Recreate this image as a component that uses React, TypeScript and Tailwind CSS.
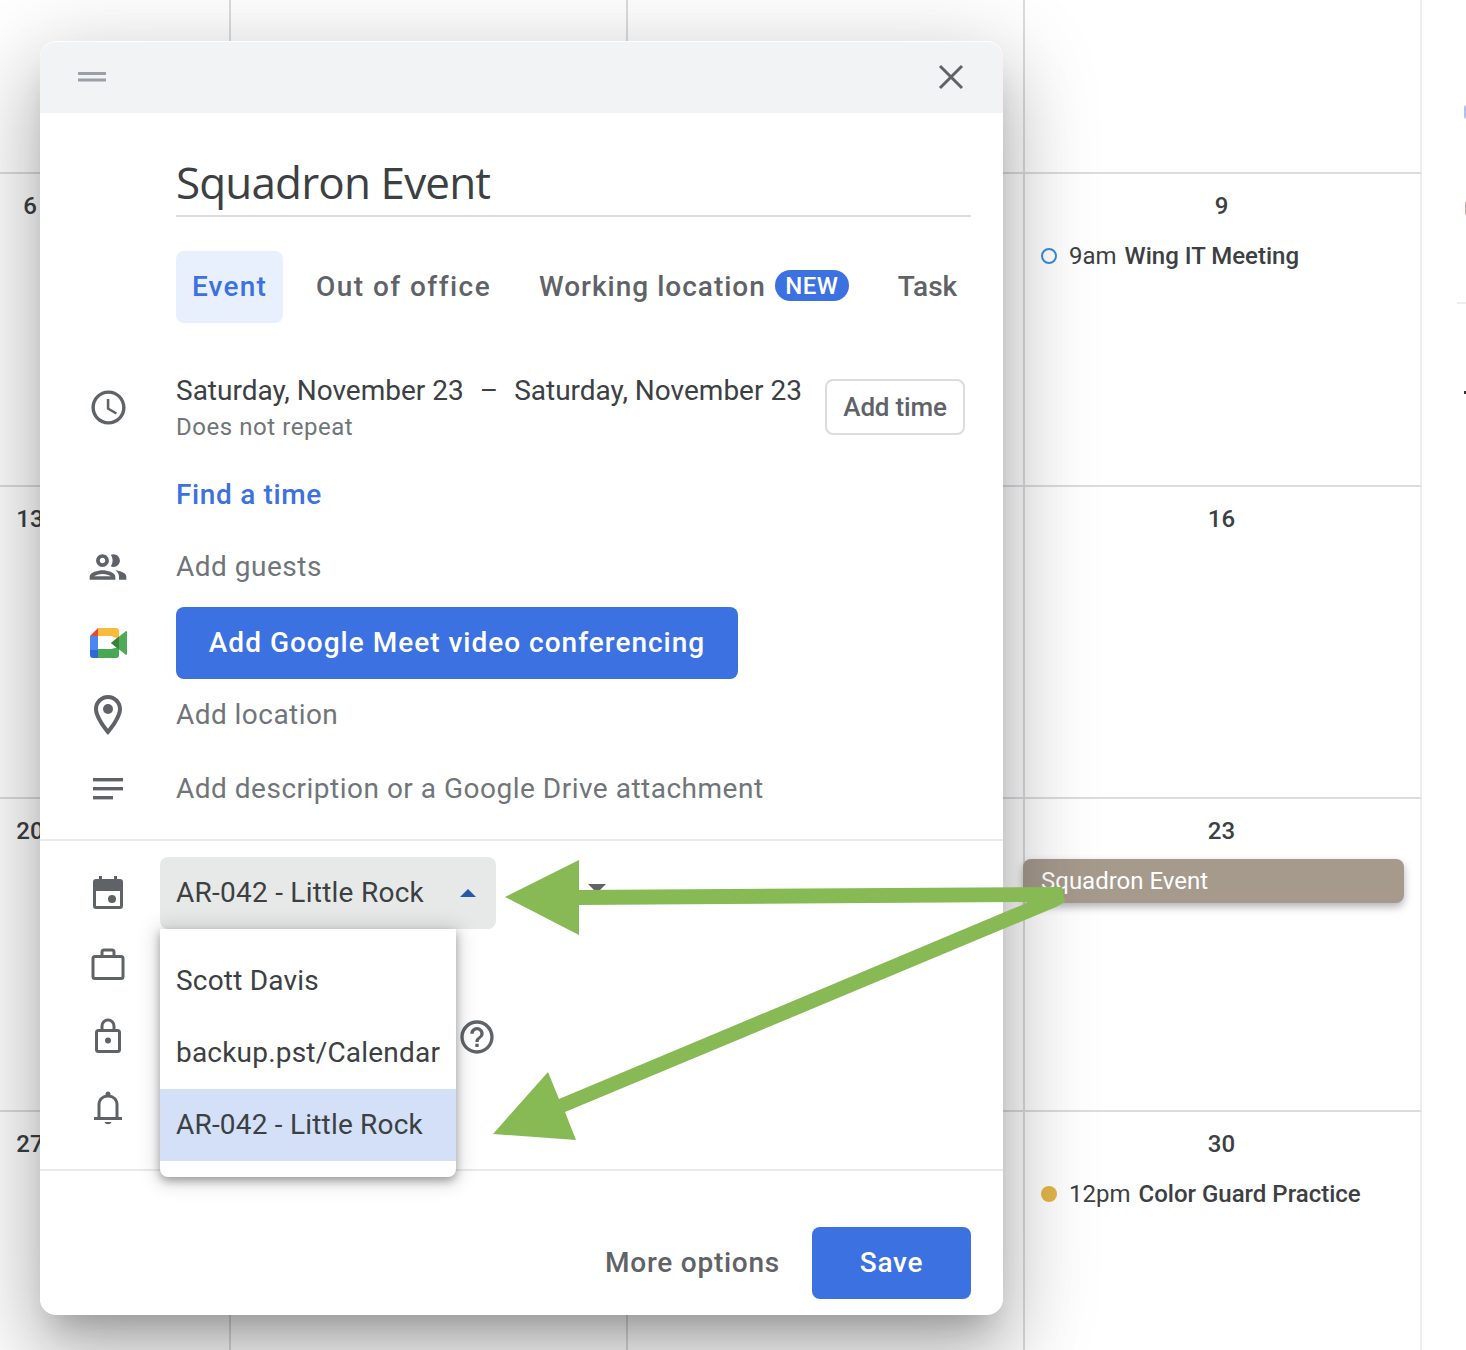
import React from "react";

const roboto = "font-['Roboto',sans-serif]";
const gsans = "font-['Open_Sans',sans-serif]";

const gray = "#5f6368";

function HandleIcon() {
  return (
    <svg width="28" height="10" viewBox="0 0 28 10">
      <rect y="0" width="28" height="3" fill="#9aa0a6" />
      <rect y="6.5" width="28" height="3" fill="#9aa0a6" />
    </svg>
  );
}
function CloseIcon() {
  return (
    <svg width="26" height="26" viewBox="0 0 26 26" fill="none" stroke={gray} strokeWidth="3">
      <path d="M2 2 L24 24 M24 2 L2 24" />
    </svg>
  );
}
function ClockIcon() {
  return (
    <svg width="41" height="41" viewBox="0 0 24 24" fill={gray}>
      <path d="M11.99 2C6.47 2 2 6.48 2 12s4.47 10 9.99 10C17.52 22 22 17.52 22 12S17.52 2 11.99 2zM12 20c-4.42 0-8-3.58-8-8s3.58-8 8-8 8 3.58 8 8-3.58 8-8 8zm.5-13H11v6l5.25 3.15.75-1.23-4.5-2.67z" />
    </svg>
  );
}
function PeopleIcon() {
  return (
    <svg width="44" height="44" viewBox="0 0 24 24" fill={gray}>
      <path d="M9 13.75c-2.34 0-7 1.17-7 3.5V19h14v-1.75c0-2.33-4.66-3.5-7-3.5zM4.34 17c.84-.58 2.87-1.25 4.66-1.25s3.82.67 4.66 1.25H4.34zM9 12c1.93 0 3.5-1.57 3.5-3.5S10.93 5 9 5 5.5 6.57 5.5 8.5 7.07 12 9 12zm0-5c.83 0 1.5.67 1.5 1.5S9.83 10 9 10s-1.5-.67-1.5-1.5S8.17 7 9 7zm7.04 6.81c1.16.84 1.96 1.96 1.96 3.44V19h4v-1.75c0-2.02-3.5-3.17-5.96-3.44zM15 12c1.93 0 3.5-1.57 3.5-3.5S16.93 5 15 5c-.54 0-1.04.13-1.5.35.63.89 1 1.98 1 3.15s-.37 2.26-1 3.15c.46.22.96.35 1.5.35z" />
    </svg>
  );
}
function MeetIcon() {
  return (
    <svg width="37" height="30" viewBox="0 0 37 30">
      <path d="M0 8 L8 0 V8 Z" fill="#e2483d" />
      <rect x="0" y="8" width="8" height="14" fill="#4a87f3" />
      <path d="M0 22 H8 V30 H3 Q0 30 0 27 Z" fill="#2f68d0" />
      <path d="M8 0 H26 Q29 0 29 3 V11 L21 8 H8 Z" fill="#f9bc3a" />
      <path d="M8 21 H21 L29 19 V27 Q29 30 26 30 H8 Z" fill="#48a853" />
      <path d="M21 15 L36 3 Q37 3 37 4 V26 Q37 27 36 27 L21 15 Z" fill="#4fab58" />
      <path d="M21 15 L29 8.6 V21.4 Z" fill="#38803c" />
    </svg>
  );
}
function PinIcon() {
  return (
    <svg width="48" height="48" viewBox="0 0 24 24" fill={gray}>
      <path d="M12 2C8.13 2 5 5.13 5 9c0 5.25 7 13 7 13s7-7.75 7-13c0-3.87-3.13-7-7-7zM7 9c0-2.76 2.24-5 5-5s5 2.24 5 5c0 2.88-2.88 7.19-5 9.88C9.92 16.21 7 11.85 7 9z" />
      <circle cx="12" cy="9" r="2.5" />
    </svg>
  );
}
function NotesIcon() {
  return (
    <svg width="30" height="22" viewBox="0 0 30 22" fill={gray}>
      <rect y="0" width="30" height="3.4" />
      <rect y="9" width="30" height="3.4" />
      <rect y="18" width="20" height="3.4" />
    </svg>
  );
}
function CalIcon() {
  return (
    <svg width="30" height="33" viewBox="0 0 30 33" fill={gray}>
      <path
        fillRule="evenodd"
        d="M6 0 H9 V3 H21 V0 H24 V3 H27 Q30 3 30 6 V30 Q30 33 27 33 H3 Q0 33 0 30 V6 Q0 3 3 3 H6 Z M3 15 V30 H27 V15 Z"
      />
      <circle cx="19" cy="23" r="4" />
    </svg>
  );
}
function BriefcaseIcon() {
  return (
    <svg width="34" height="32" viewBox="0 0 34 32" fill="none" stroke={gray} strokeWidth="3">
      <rect x="2" y="8.5" width="30" height="22" rx="2" />
      <path d="M11 8 V4 Q11 2 13 2 H21 Q23 2 23 4 V8" />
    </svg>
  );
}
function LockIcon() {
  return (
    <svg width="26" height="35" viewBox="0 0 26 35" fill="none" stroke={gray} strokeWidth="3">
      <rect x="1.5" y="12.5" width="23" height="21" rx="2" />
      <path d="M7 12 V8 A6 6 0 0 1 19 8 V12" />
      <circle cx="13" cy="22.5" r="3" fill={gray} stroke="none" />
    </svg>
  );
}
function BellIcon() {
  return (
    <svg width="28" height="34" viewBox="0 0 28 34" fill="none" stroke={gray} strokeWidth="3">
      <path d="M0 27.5 H28" />
      <path d="M5 27 V14 C5 8 9 5 14 5 C19 5 23 8 23 14 V27" />
      <circle cx="14" cy="3" r="2.5" fill={gray} stroke="none" />
      <path d="M10.5 31 H17.5 C16.5 34 11.5 34 10.5 31 Z" fill={gray} stroke="none" />
    </svg>
  );
}
function HelpIcon() {
  return (
    <svg width="40" height="40" viewBox="0 0 24 24" fill={gray}>
      <path d="M11 18h2v-2h-2v2zm1-16C6.48 2 2 6.48 2 12s4.48 10 10 10 10-4.48 10-10S17.52 2 12 2zm0 18c-4.41 0-8-3.59-8-8s3.59-8 8-8 8 3.59 8 8-3.59 8-8 8zm0-14c-2.21 0-4 1.79-4 4h2c0-1.1.9-2 2-2s2 .9 2 2c0 2-3 1.75-3 5h2c0-2.25 3-2.5 3-5 0-2.21-1.79-4-4-4z" />
    </svg>
  );
}

function Modal() {
  return (
    <div className="absolute left-[40px] top-[42px] w-[963px] h-[1273px] bg-white rounded-[16px] shadow-[0_-1px_0_#ffffff,0_48px_76px_6px_rgba(0,0,0,0.16),0_18px_92px_16px_rgba(0,0,0,0.14),0_22px_30px_-14px_rgba(0,0,0,0.22)]">
      <div className="h-[71px] pb-[1px] bg-[#f1f3f4] rounded-t-[16px] flex items-center justify-between pl-[38px] pr-[39px]">
        <HandleIcon />
        <CloseIcon />
      </div>
      <div className="pl-[136px] pr-[32px]">
        <div className={`h-[104px] flex items-end pb-[3px] border-b-2 border-[#dadce0] text-[44px] leading-[60px] tracking-[-0.85px] text-[#3c4043] ${gsans}`}>
          Squadron Event
        </div>
        <div className={`mt-[34px] flex gap-[17px] text-[28px] text-[#5f6368] font-medium ${roboto}`}>
          <div className="h-[72px] w-[107px] shrink-0 flex items-center justify-center rounded-[8px] bg-[#e8f0fe] text-[#3b71e0] tracking-[1.2px]">Event</div>
          <div className="h-[72px] px-[16px] flex items-center tracking-[1.45px] w-[206px] shrink-0 whitespace-nowrap">Out of office</div>
          <div className="h-[72px] px-[16px] shrink-0 flex items-center gap-[9px] tracking-[1px] whitespace-nowrap">
            Working location
            <span className="h-[31px] w-[74px] -mt-[3px] rounded-full bg-[#3b71e0] text-white text-[24px] flex items-center justify-center tracking-[0.5px]">NEW</span>
          </div>
          <div className="h-[72px] px-[16px] shrink-0 flex items-center">Task</div>
        </div>
      </div>

      <div className="mt-[49px] flex items-start h-[70px]">
        <div className="w-[136px] h-[70px] flex justify-center items-center"><ClockIcon /></div>
        <div className={`flex-1 pt-[1px] ${roboto}`}>
          <div className="text-[28px] leading-[36px] text-[#3c4043] whitespace-nowrap flex">
            <span>Saturday, November 23</span>
            <span className="ml-[16px] mr-[16px]">–</span>
            <span>Saturday, November 23</span>
          </div>
          <div className="text-[24px] leading-[36px] text-[#70757a] tracking-[0.55px]">Does not repeat</div>
        </div>
        <div className={`mr-[38px] mt-[7px] w-[140px] h-[56px] border-2 border-[#dadce0] rounded-[8px] flex items-center justify-center text-[26px] font-medium tracking-[-0.2px] text-[#5f6368] ${roboto}`}>
          Add time
        </div>
      </div>

      <div className={`mt-[25px] ml-[136px] h-[56px] flex items-center text-[28px] font-medium tracking-[0.65px] text-[#3b71e0] ${roboto}`}>Find a time</div>

      <div className="mt-[16px] h-[56px] flex items-center">
        <div className="w-[136px] flex justify-center"><PeopleIcon /></div>
        <div className={`text-[28px] tracking-[0.5px] text-[#70757a] ${roboto}`}>Add guests</div>
      </div>

      <div className="mt-[12px] h-[72px] flex items-center">
        <div className="w-[136px] flex justify-center"><MeetIcon /></div>
        <div className={`w-[562px] h-[72px] rounded-[8px] bg-[#3b71e0] text-white flex items-center justify-center text-[28px] font-medium tracking-[1px] whitespace-nowrap ${roboto}`}>
          Add Google Meet video conferencing
        </div>
      </div>

      <div className="h-[72px] flex items-center">
        <div className="w-[136px] flex justify-center"><PinIcon /></div>
        <div className={`text-[28px] tracking-[0.45px] text-[#70757a] ${roboto}`}>Add location</div>
      </div>

      <div className="mt-[2px] h-[72px] flex items-center">
        <div className="w-[136px] flex justify-center"><NotesIcon /></div>
        <div className={`text-[28px] tracking-[0.5px] text-[#70757a] ${roboto}`}>Add description or a Google Drive attachment</div>
      </div>

      <div className="mt-[14px] h-[2px] bg-[#e8eaed]" />

      <div className="relative pt-[16px]">
        <div className="h-[72px] flex items-center">
          <div className="w-[136px] -mt-[2px] flex justify-center"><CalIcon /></div>
          <div className={`-ml-[16px] w-[336px] h-[72px] rounded-[8px] bg-[#e7e9e8] pl-[16px] pr-[20px] flex items-center justify-between text-[28px] tracking-[0.25px] text-[#3c4043] ${roboto}`}>
            <span>AR-042 - Little Rock</span>
            <svg width="16" height="8" viewBox="0 0 16 8" className="-mt-[1px]"><path d="M0 8 L8 0 L16 8 Z" fill="#2a58a8" /></svg>
          </div>
          <svg width="18" height="9" viewBox="0 0 18 9" className="ml-[92px] -mt-[9px]"><path d="M0 0 H18 L9 9 Z" fill={gray} /></svg>
        </div>
        <div className="h-[72px] flex items-center"><div className="w-[136px] -mt-[3px] flex justify-center"><BriefcaseIcon /></div></div>
        <div className="h-[72px] flex items-center">
          <div className="w-[136px] -mt-[3px] flex justify-center"><LockIcon /></div>
          <div className="ml-[281px]"><HelpIcon /></div>
        </div>
        <div className="h-[72px] flex items-center"><div className="w-[136px] -mt-[2px] flex justify-center"><BellIcon /></div></div>

        <div className={`absolute left-[120px] top-[88px] w-[296px] bg-white rounded-b-[8px] pt-[16px] pb-[16px] text-[28px] tracking-[0.2px] text-[#3c4043] shadow-[0_4px_8px_rgba(0,0,0,0.3),0_2px_20px_4px_rgba(0,0,0,0.15)] ${roboto}`}>
          <div className="h-[72px] px-[16px] flex items-center">Scott Davis</div>
          <div className="h-[72px] px-[16px] flex items-center whitespace-nowrap">backup.pst/Calendar</div>
          <div className="h-[72px] px-[16px] flex items-center bg-[#d3e0f7]">AR-042 - Little Rock</div>
        </div>
      </div>

      <div className="mt-[24px] h-[2px] bg-[#e8eaed]" />

      <div className="mt-[56px] flex justify-end items-center pr-[32px] gap-[32px]">
        <span className={`text-[28px] font-medium tracking-[0.75px] text-[#5f6368] ${roboto}`}>More options</span>
        <div className={`w-[159px] h-[72px] rounded-[8px] bg-[#3b71e0] text-white flex items-center justify-center text-[28px] font-medium tracking-[0.75px] ${roboto}`}>Save</div>
      </div>
    </div>
  );
}

function Arrows() {
  return (
    <svg className="absolute left-0 top-0 pointer-events-none" width="1466" height="1350" viewBox="0 0 1466 1350">
      <polygon
        fill="#87ba54"
        points="505,897 579,860 579,890 1062,887 1065,902 1056,907 565,1112 576,1140 493,1134 548,1072 559,1099 1029,902 579,905 579,935"
      />
    </svg>
  );
}

const line = "border-r-2 border-b-2 border-[#dadce0]";
const lastLine = "border-r-2 border-[#dadce0]";
const dayCol = "border-r-2 border-b-2 border-b-[#dadce0] border-r-[#eeeef0] pt-[16px]";
const num = "text-[24px] font-medium text-[#3c4043] leading-[32px]";

export default function App() {
  return (
    <div className={`relative w-[1466px] h-[1350px] bg-white overflow-hidden ${roboto}`}>
      <div className="grid grid-flow-col grid-cols-[231px_397px_397px_397px_1fr] grid-rows-[174px_313px_312px_313px_1fr] h-[1350px]">
        <div className={line} />
        {["6", "13", "20"].map((d) => (
          <div key={d} className={`${line} pt-[16px]`}>
            <div className={`w-[60px] text-center ${num}`}>{d}</div>
          </div>
        ))}
        <div className={`${lastLine} pt-[16px]`}>
          <div className={`w-[60px] text-center ${num}`}>27</div>
        </div>

        <div className={line} />
        <div className={line} />
        <div className={line} />
        <div className={line} />
        <div className={lastLine} />

        <div className={line} />
        <div className={line} />
        <div className={line} />
        <div className={line} />
        <div className={lastLine} />

        <div className="border-r-2 border-b-2 border-b-[#dadce0] border-r-[#eeeef0]" />
        <div className={dayCol}>
          <div className={`text-center pr-[2px] ${num}`}>9</div>
          <div className="mt-[18px] pl-[16px] flex items-center h-[32px] text-[24px] text-[#3c4043] whitespace-nowrap">
            <span className="w-[16px] h-[16px] rounded-full border-2 border-[#3b8ddd] mr-[12px]" />
            <span>9am</span>
            <span className="ml-[8px] font-medium">Wing IT Meeting</span>
          </div>
        </div>
        <div className={dayCol}>
          <div className={`text-center pr-[2px] ${num}`}>16</div>
        </div>
        <div className={dayCol}>
          <div className={`text-center pr-[2px] ${num}`}>23</div>
          <div className="-ml-[2px] mt-[12px] w-[381px] h-[44px] rounded-[8px] bg-[#a59a8c] shadow-[0_4px_8px_rgba(0,0,0,0.3)] pl-[18px] flex items-center text-[24px] text-white">Squadron Event</div>
        </div>
        <div className="border-r-2 border-r-[#eeeef0] pt-[16px]">
          <div className={`text-center pr-[2px] ${num}`}>30</div>
          <div className="mt-[18px] pl-[16px] flex items-center h-[32px] text-[24px] text-[#3c4043] whitespace-nowrap">
            <span className="w-[16px] h-[16px] rounded-full bg-[#e5b64a] mr-[12px]" />
            <span>12pm</span>
            <span className="ml-[8px] font-medium">Color Guard Practice</span>
          </div>
        </div>

        <div className="relative row-span-5">
          <div className="absolute left-[42px] top-[105px] w-[3px] h-[14px] rounded-l-[4px] bg-[#a8c0f5]" />
          <div className="absolute left-[43px] top-[201px] w-[2px] h-[14px] rounded-l-[4px] bg-[#e8a59c]" />
          <div className="absolute left-[35px] top-[302px] w-[9px] h-[2px] bg-[#eeeef0]" />
          <div className="absolute left-[42px] top-[391px] w-[2px] h-[3px] bg-[#333]" />
        </div>
      </div>
      <Modal />
      <Arrows />
    </div>
  );
}
